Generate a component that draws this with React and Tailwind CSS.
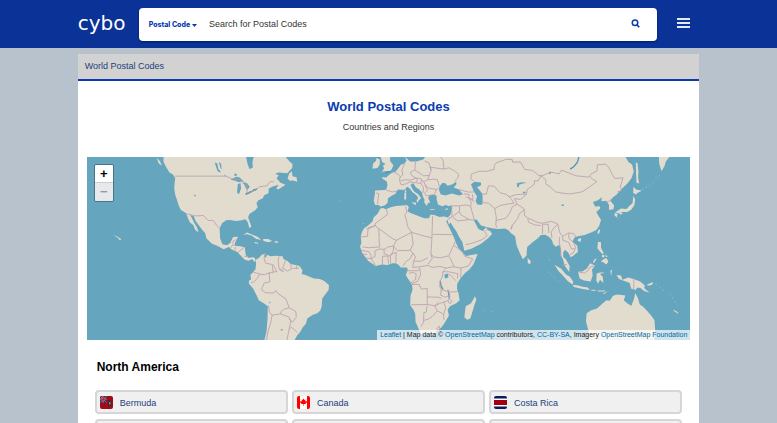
import React from "react";

const countries = [
  { name: "Bermuda", flag: "bermuda" },
  { name: "Canada", flag: "canada" },
  { name: "Costa Rica", flag: "costarica" },
];

const Flag = ({ code }) => {
  switch (code) {
    case "bermuda":
      return (
        <>
          <rect width="26" height="26" fill="#a30a18" />
          <rect width="13" height="13" fill="#26335f" />
          <path d="M0 0L13 13M13 0L0 13" stroke="#a995b0" strokeWidth="1.500" />
          <path d="M6.5 0V13M0 6.5H13" stroke="#cbb6c4" strokeWidth="3" />
          <path d="M6.5 0V13M0 6.5H13" stroke="#b51225" strokeWidth="2" />
          <path d="M16 9h7v7q0 4-3.500 5q-3.500-1-3.500-5z" fill="#3e2632" />
          <path d="M18 12h3v5h-3z" fill="#8d858c" />
        </>
      );
    case "canada":
      return (
        <>
          <rect width="26" height="26" fill="#fff" />
          <path d="M0 0h6v26H0zM20 0h6v26h-6z" fill="#f00" />
          <path
            d="M13 5l1.800 3 2-.8-.4 3.800 2.800-1 .8 2.500-3.500 3.500h-3v4h-1v-4h-3L6 12.500 7 10l2.700 1-.5-3.800 2 .8z"
            fill="#f00"
          />
        </>
      );
    case "costarica":
      return (
        <>
          <rect width="26" height="26" fill="#fff" />
          <path d="M0 0h26v5H0zM0 21h26v5H0z" fill="#0a1c5c" />
          <path d="M0 8h26v10H0z" fill="#a5000f" />
        </>
      );
    default:
      return null;
  }
};

const WorldMap = () => (
  <svg
    viewBox="0 0 1806 549"
    preserveAspectRatio="xMidYMid slice"
    className="block h-full w-full"
    role="img"
    aria-label="World map"
  >
    <rect width="1806" height="549" fill="#65a5be" />

    {/* continents */}
    <g fill="#e2dccf">
      <path d="M229 0L229 16L238 33L246 46L258 54L264 64L262 79L261 96L264 114L269 129L275 147L281 159L297 169L302 184L308 197L318 204L324 219L334 227L329 211L321 198L314 184L309 174L319 177L325 192L335 206L345 219L354 229L357 244L374 260L389 266L409 277L424 270L434 278L450 285L462 298L472 308L484 311L494 306L501 315L504 309L502 302L494 301L484 303L475 294L472 271L458 268L441 266L444 255L452 239L437 240L429 257L419 265L405 262L398 243L397 214L404 199L416 190L429 189L444 192L459 191L474 187L480 194L486 214L492 209L482 181L486 171L504 159L511 150L507 140L512 131L526 124L530 115L543 109L544 95L556 89L574 84L566 94L572 98L594 84L579 78L567 64L574 55L561 51L541 67L558 54L573 47L599 49L614 34L615 22L606 14L594 0Z" />
      <path d="M504 309L515 302L522 294L534 289L531 300L540 294L549 298L564 296L575 297L585 298L588 306L600 312L609 321L624 324L636 327L645 340L642 351L654 354L666 359L679 364L696 366L709 371L724 384L723 399L712 413L704 424L702 449L698 460L689 468L676 473L659 484L655 500L645 511L638 524L629 534L621 549L531 549L537 522L540 488L541 447L529 438L514 429L507 414L497 394L484 379L485 370L491 367L489 354L497 345L504 337L506 320Z" />
      <path d="M951 0L956 11L950 20L939 24L930 37L924 44L913 48L904 54L895 62L882 61L884 66L897 74L899 86L895 99L880 100L862 101L861 115L858 131L862 144L872 144L879 149L892 145L900 137L900 125L909 118L923 111L930 98L942 99L951 99L958 90L965 94L974 106L984 114L991 122L986 132L988 138L995 128L1000 124L991 112L979 104L972 93L968 84L976 79L984 91L994 98L1002 107L1005 119L1010 129L1009 137L1017 147L1020 138L1027 137L1021 124L1024 116L1034 114L1046 116L1046 127L1050 143L1063 148L1074 144L1082 148L1091 145L1092 156L1087 174L1079 182L1069 179L1055 180L1039 174L1028 173L1023 184L1009 184L993 178L984 174L972 170L959 164L963 151L957 144L944 146L924 147L909 151L894 157L886 153L878 155L869 171L858 181L854 194L841 206L829 214L822 227L819 239L821 257L817 269L824 289L832 299L841 311L864 327L882 322L899 324L914 319L924 319L931 322L939 331L957 331L960 338L954 354L960 364L967 374L973 386L974 399L968 415L967 444L976 456L982 470L983 494L994 519L999 529L1018 531L1039 527L1060 511L1069 499L1083 475L1079 458L1086 447L1105 438L1115 429L1112 410L1107 394L1108 379L1118 363L1132 347L1144 337L1156 322L1169 291L1154 293L1134 297L1121 284L1110 271L1102 253L1097 239L1086 216L1075 194L1078 188L1083 203L1088 197L1095 209L1105 223L1114 241L1123 255L1129 281L1150 275L1179 260L1200 244L1212 231L1207 223L1199 219L1194 211L1184 222L1171 216L1165 204L1157 189L1165 187L1179 206L1198 211L1212 214L1229 216L1250 215L1260 219L1269 229L1281 238L1285 264L1294 286L1304 307L1315 296L1317 270L1333 256L1349 244L1358 234L1371 233L1383 240L1391 249L1395 262L1403 269L1413 263L1419 279L1417 295L1424 306L1429 325L1443 345L1444 327L1433 307L1425 300L1425 286L1430 278L1440 287L1447 301L1455 296L1469 284L1467 266L1453 254L1458 242L1468 238L1489 234L1510 226L1524 219L1533 206L1538 189L1528 173L1524 165L1536 154L1534 148L1520 149L1514 135L1529 130L1540 121L1539 133L1554 132L1562 144L1562 159L1575 157L1577 146L1565 130L1576 120L1584 114L1605 91L1617 80L1629 64L1636 45L1631 23L1620 16L1611 0Z" />
      <path d="M1711 0L1743 0L1732 14L1728 28L1719 43L1712 20Z" />
      {/* islands of the Atlantic and Caribbean */}
      <path d="M600 65L605 50L613 43L615 58L627 61L629 75L616 71L607 72Z M208 2L219 14L224 27L215 20Z M467 233L479 227L497 234L510 239L522 248L506 246L494 236L479 232Z M527 246L542 246L554 252L543 256L528 252Z M501 255l11 2v3l-10-1Z M562 253h9v4h-9Z M78 234L89 238L103 247L98 250L92 242Z" />
      {/* British Isles, Mediterranean */}
      <path d="M879 1L907 0L907 13L917 26L909 42L886 44L881 49L889 34L885 28L893 22L883 16Z M856 20L865 12L866 4L876 8L876 23L869 34L854 36Z M950 108h5v20h-6Z M951 100h4v7h-4Z M970 137L984 137L984 145Z M1026 157h14v2h-14Z M1069 157L1081 153L1077 159Z M956 2h10v7h-10Z" />
      {/* Madagascar, Sri Lanka */}
      <path d="M1161 417L1165 428L1159 444L1147 484L1137 488L1129 480L1133 447L1149 438Z M1318 302L1328 313L1326 321L1319 319Z" />
      {/* Japan and Sakhalin */}
      <path d="M1642 17L1647 19L1650 44L1649 62L1652 80L1644 78L1643 54Z M1635 90L1643 98L1660 102L1648 108L1642 113L1634 108Z M1635 117L1640 128L1638 144L1629 158L1617 165L1602 165L1592 170L1580 167L1598 155L1614 156L1624 146L1632 139Z M1579 168L1588 171L1585 182L1578 175Z M1594 168h10l-8 6Z" />
      {/* south east Asia */}
      <path d="M1530 219L1536 217L1532 231L1527 228Z M1469 246L1479 243L1477 254L1468 252Z M1529 254L1538 256L1538 273L1546 288L1542 292L1527 274Z M1537 315L1545 307L1555 303L1560 315L1553 322L1544 315Z M1541 294h7v7h-7Z M1551 290l7 10h-5Z M1520 305l-7 11 4 1 8-12Z" />
      <path d="M1399 323L1419 335L1433 352L1445 359L1455 374L1453 382L1438 372L1422 353L1410 341Z M1453 383L1471 385L1483 389L1499 391L1504 399L1483 396L1457 390Z M1469 344L1482 343L1496 334L1505 319L1520 325L1511 338L1513 355L1507 373L1487 370L1474 364Z M1525 349L1535 346L1550 346L1535 351L1543 359L1545 378L1535 368L1529 380L1524 370Z M1509 398h13v3h-13Z M1528 400h22v3h-22Z M1543 409l16-7-12 9Z M1566 340l5-2-2 12 5 5-7-4Z" />
      <path d="M1584 354L1598 355L1602 368L1619 361L1636 366L1655 373L1669 385L1667 393L1683 407L1667 402L1656 393L1647 391L1641 399L1628 394L1624 378L1606 371L1592 366Z M1676 382L1694 375L1691 383L1678 386Z M1705 381l8 6M1756 458L1768 465L1769 470L1755 461Z" />
      <path d="M1495 468L1509 459L1526 454L1540 441L1554 429L1564 431L1574 416L1586 412L1611 415L1606 429L1617 439L1629 446L1637 424L1640 408L1648 422L1654 442L1664 449L1675 460L1688 475L1698 489L1700 518L1698 549L1502 549L1500 520L1493 492Z" />
    </g>

    {/* seas and lakes */}
    <g fill="#65a5be">
      <path d="M476 0L499 0L495 15L496 33L486 37L480 20Z" />
      <path d="M429 69L446 60L457 62L468 73L454 76L443 72Z M451 83L459 78L461 94L455 112L449 107Z M463 77L479 79L487 90L479 100L474 91L470 82Z" />
      <path d="M382 17L390 20L393 37L398 42L400 48L391 43L387 32Z M395 16l6 4 2 19-4-6Z M441 50l8 2-2 6-6-2Z M319 113l7 2-3 5Z M411 53l5 3-3 4Z" />
      <path d="M951 0L1012 0L1006 8L985 14L967 14Z" />
      <path d="M1053 99L1055 88L1064 78L1072 79L1079 87L1094 82L1105 74L1105 83L1097 92L1113 98L1125 112L1113 116L1092 110L1072 116L1058 112Z" />
      <path d="M1149 82L1160 75L1179 77L1179 85L1167 91L1176 102L1183 111L1184 136L1181 144L1167 142L1163 132L1167 118L1157 103Z" />
      <path d="M1069 352l12-3v12l-10 3Z M532 296l5 1-2 7Z M544 432l6 5-3 3Z M580 515h5v5h-5Z M1286 79l14-3 16 2-14 3-9 3-1 8-5-2Z M1382 45h6v6h-6Z M1420 143h7v4h-7Z M1304 105h8v4h-8Z" />
    </g>
    <g fill="none" stroke="#4e96b6" strokeWidth="4">
      <path d="M1472 0L1467 17L1457 29L1446 37M1057 371L1059 385L1065 397M1081 400L1084 424M475 112L492 104L508 97M906 44l-14 4" />
      <path d="M475 112L484 108L492 104M497 100L508 97" stroke="#3d7fae" />
    </g>

    {/* borders */}
    <g fill="none" stroke="#bb9eae" strokeWidth="2.500" strokeLinejoin="round">
      <path d="M264 58L414 58L436 66L452 68L474 77L480 94L478 110L508 97L516 90L539 87L548 74L559 75M300 171L325 177L349 176L363 191L377 190L387 204L397 214M427 275L437 264L437 252L445 248M444 270L442 283M452 286L470 271M471 298L480 298" />
      <path d="M531 291L530 306L535 319L554 322L557 347L545 347L531 353L517 351L497 345M517 351L509 364L499 375L491 377M557 322L568 344L557 344M575 298L572 311L574 332L588 344M545 347L547 374L530 378L522 398L535 407L546 407L557 408L566 401L571 409L595 425L605 452L589 456L580 464L579 470L554 474L546 465L543 446M554 474L549 500L542 520L537 549M579 470L605 480L610 492L606 510L598 549M605 452L625 463L626 480L615 495L604 485M605 515L612 510L629 525M594 310L585 334L600 342L615 334L635 333M610 320L611 334M627 326L626 336M588 344L574 337" />
      <path d="M864 108L873 110L869 142M895 100L914 105L930 103M918 45L932 53L937 60L935 71L940 84L955 81L966 75M937 60L945 55L942 40L950 21M983 10L981 39L967 47L973 57L985 64L968 70L952 69L938 72M981 40L1007 57L1024 56L1030 40L1023 18L1010 13M1030 40L1026 31L1068 37L1065 10L1058 0M1024 56L1019 69L1007 75L999 65L985 64M1007 75L1013 85L1023 94L1047 98L1053 92M1019 69L1035 67L1048 68L1054 88M985 78L999 80L1007 93L1005 109M999 80L1001 69M1011 85L1019 99L1010 109L1015 117L1040 113M1040 113L1045 98M966 75L981 78L989 72L985 64M1068 37L1083 33L1100 43L1112 52L1110 63L1100 73M1157 72L1148 66L1150 52L1174 43L1193 44L1218 38L1219 26L1225 18L1256 7L1273 9L1273 16L1297 16L1310 38L1333 41L1352 56L1361 57L1388 46L1413 51L1420 40L1430 44L1464 57L1502 61L1508 52L1526 42L1527 24L1552 22L1562 33L1571 52L1579 65L1604 63L1596 88L1600 101L1587 105" />
      <path d="M1358 57L1372 68L1373 82L1385 89L1402 105L1430 110L1447 111L1481 105L1498 94L1526 74L1512 67L1504 58M1358 57L1350 72L1338 72L1339 82L1317 98L1315 112L1285 113L1264 120L1253 112L1236 108L1218 88L1201 87L1195 112L1181 111M1181 137L1202 139L1220 155L1236 146L1262 141L1278 139L1270 127L1261 118M1220 155L1225 184L1223 203L1226 212M1223 191L1253 184L1265 168L1273 149L1287 142L1307 155L1310 177L1319 183L1342 194L1359 199L1372 197L1390 193L1409 202L1414 226L1423 238L1441 228L1457 230L1463 240M1287 142L1279 125L1297 128L1315 112M1272 206L1269 215M1310 158L1293 171L1289 184L1273 205L1269 218M1319 185L1321 196L1340 204L1358 206M1363 202L1363 230M1380 202L1382 228M1363 202L1380 202M1409 202L1397 213L1389 225L1391 243M1414 240L1413 256L1416 271L1419 300M1423 238L1424 250L1441 256L1449 275L1459 276M1441 230L1442 245L1455 255L1462 272L1455 288L1445 292M1424 322L1436 323M1469 344L1488 348L1500 340L1505 330L1519 326M1636 366L1636 398M1552 137L1573 128" />
      <path d="M1113 98L1142 106L1160 105M1127 111L1143 113L1143 123L1150 137L1148 148L1133 144L1115 147L1090 147M1133 120L1155 128L1153 112M1143 123L1160 135M1115 147L1114 164L1097 176L1092 182M1091 149L1092 178L1083 187M1114 164L1119 174L1144 188L1155 190L1158 186M1148 148L1152 164L1158 186M1095 182L1110 192L1144 188M1083 188L1084 180M1188 220L1197 236L1182 248L1155 258L1133 263M1194 220L1203 212" />
      <path d="M896 157L899 173L862 200L862 206L836 215M862 206L873 215L916 246L926 250L971 226L959 208L956 190L951 175L957 165L953 148M862 206L841 216L839 238L820 240M873 215L875 270L843 272L825 270M971 226L1001 235L1032 243L1034 177M1034 232L1094 233M971 226L976 261L967 280M1032 243L1029 290L1033 305L1020 322M926 250L917 267L929 281L967 280M889 277L900 270L917 267L917 281L908 297L908 320M858 284L874 276L889 277L889 290L900 294M820 280L844 284L850 295L850 305L862 299L862 285M825 292L838 292M833 303L850 305L863 324M884 323L884 298L908 296M902 320L900 296M908 293L925 286L924 317M967 280L975 288L967 305L955 313L945 328M975 288L983 300L977 313L1000 312L1020 302M977 313L975 331L998 329L1020 325L1033 331L1055 328L1075 333L1098 329L1088 306L1082 297L1089 282L1097 265L1103 252M1029 290L1037 300L1058 302L1080 297M1097 265L1124 284L1130 298L1154 306L1141 327L1119 333L1098 329M1119 333L1118 361M1075 333L1065 344L1063 360L1057 371M955 341L974 341L990 341L995 335M963 349L974 346L985 350L983 367L969 378M995 332L998 353L989 373L970 381M970 382L994 382L1000 396L1018 394L1018 419L1031 420L1050 420L1061 424M1065 344L1082 344L1110 350L1108 365M1083 350L1104 371M1057 371L1055 387L1060 397L1085 405L1112 403M1018 419L1018 442L969 443M1060 397L1058 414L1070 420L1086 415L1079 397M1018 442L1040 446L1058 438L1081 430L1086 418M1018 446L1015 465L1008 466L1007 495L999 508M1040 446L1053 434M1040 446L1048 461L1067 471L1073 452L1068 436M1048 461L1033 478L1023 485L1007 490M1067 471L1068 488M1046 514L1054 507L1056 516L1049 520Z M1086 425L1092 432L1086 440L1080 430" />
    </g>
    <path
      d="M1587 186L1598 176M1660 99L1686 85L1705 65L1719 48M1701 381L1731 404M1743 410L1758 430L1765 444M1379 343L1402 365L1411 373M1384 312l-5-14M1215 462l-8 5M1187 461l4-2M824 199l6 2M756 132l14 5"
      fill="none"
      stroke="#9fc3ca"
      strokeWidth="2"
      strokeDasharray="6 7"
    />
  </svg>
);

const Header = () => (
  <header className="h-12 bg-[#0a3297]">
    <div className="mx-auto flex h-full w-4/5 items-center">
      <a
        href="#home"
        className="w-[61px] shrink-0 pb-0.5 font-['DejaVu_Sans',sans-serif] text-xl leading-none text-white"
      >
        cybo
      </a>
      <form className="flex h-[33px] flex-1 items-center rounded bg-white pl-2.5 shadow-[0_1px_2px_#001a60]">
        <button
          type="button"
          className="flex shrink-0 items-center gap-0.5 pt-0.5 font-[Inter,sans-serif] text-[7px] font-extrabold text-[#0a3caf]"
        >
          Postal Code
          <svg viewBox="0 0 10 6" className="h-[3px] w-[5px]" fill="currentColor">
            <path d="M0 0h10L5 6z" />
          </svg>
        </button>
        <input
          type="text"
          aria-label="Search for Postal Codes"
          placeholder="Search for Postal Codes"
          className="ml-3 min-w-0 flex-1 bg-transparent pt-0.5 text-[9px] text-[#333] outline-none placeholder:text-[#333] placeholder:opacity-100"
        />
        <button type="submit" aria-label="Search" className="mr-[17px] pb-px text-[#0a3caf]">
          <svg viewBox="0 0 18 18" className="h-[9px] w-[9px]" fill="none" stroke="currentColor">
            <circle cx="8" cy="7.500" r="5.500" strokeWidth="3" />
            <path d="M11.500 11.500L16.500 16.500" strokeWidth="3.500" />
          </svg>
        </button>
      </form>
      <button type="button" aria-label="Menu" className="mr-[9px] mb-0.5 ml-5 flex w-[13px] flex-col gap-0.5">
        <span className="h-0.5 w-full bg-[#e3eaf6]" />
        <span className="h-0.5 w-full bg-[#e3eaf6]" />
        <span className="h-0.5 w-full bg-[#e3eaf6]" />
      </button>
    </div>
  </header>
);

const CountryLink = ({ country }) => (
  <a
    href={`#${country.flag}`}
    className="flex h-6 items-center gap-[7px] rounded border-2 border-[#d6d6d6] bg-[#f0f0f0] pl-[3px] text-[9px] leading-3 text-[#1c3f7c]"
  >
    <svg viewBox="0 0 26 26" className="h-[13px] w-[13px] rounded-xs">
      <Flag code={country.flag} />
    </svg>
    <span className="pt-px">{country.name}</span>
  </a>
);

const App = () => {
  return (
    <div className="h-screen overflow-hidden bg-[#b8c2cc] font-['Liberation_Sans',Arial,sans-serif]">
      <Header />
      <main className="mx-auto mt-1.5 w-4/5 overflow-hidden rounded-t-xs bg-white pb-6">
        <nav className="flex h-[27px] items-center border-b-2 border-[#0a3caf] bg-[#d2d2d2] px-[7px] text-[9px]">
          <a href="#world" className="text-[#1c3f7c]">
            World Postal Codes
          </a>
        </nav>

        <div className="pt-[18px] text-center">
          <h1 className="text-[13px] leading-4 font-bold text-[#0a3caf]">World Postal Codes</h1>
          <p className="mt-1.5 text-[9px] leading-3 text-[#333]">Countries and Regions</p>
        </div>

        <div className="relative mx-[9px] mt-6 h-[183px] overflow-hidden">
          <WorldMap />
          <div className="absolute top-[7px] left-[7px] w-5 overflow-hidden rounded-xs border border-[#487587]">
            <button
              type="button"
              aria-label="Zoom in"
              className="block h-[18px] w-full border-b border-[#ccc] bg-white text-[13px] leading-4 font-bold text-black"
            >
              +
            </button>
            <button
              type="button"
              aria-label="Zoom out"
              className="block h-[18px] w-full bg-[#e7e9ec] text-[13px] leading-4 font-bold text-[#999]"
            >
              −
            </button>
          </div>
          <div className="absolute right-0 bottom-0 bg-white/70 px-[3px] text-[7px] leading-[10px] whitespace-nowrap text-[#222]">
            <a href="#leaflet" className="text-[#0067a3]">Leaflet</a> | Map data ©{" "}
            <a href="#osm" className="text-[#0067a3]">OpenStreetMap</a> contributors,{" "}
            <a href="#license" className="text-[#0067a3]">CC-BY-SA</a>, Imagery{" "}
            <a href="#foundation" className="text-[#0067a3]">OpenStreetMap Foundation</a>
          </div>
        </div>

        <section className="px-[17px] pt-[19px]">
          <h2 className="pl-0.5 text-xs leading-4 font-bold text-black">North America</h2>
          <div className="mt-[15px] grid grid-cols-3 gap-x-1 gap-y-[5px]">
            {countries.map((country) => (
              <CountryLink key={country.name} country={country} />
            ))}
            {/* next row, still empty */}
            {countries.map((country) => (
              <div
                key={country.flag}
                className="h-6 rounded border-2 border-[#d6d6d6] bg-[#f0f0f0]"
              />
            ))}
          </div>
        </section>
      </main>
    </div>
  );
};

export default App;
